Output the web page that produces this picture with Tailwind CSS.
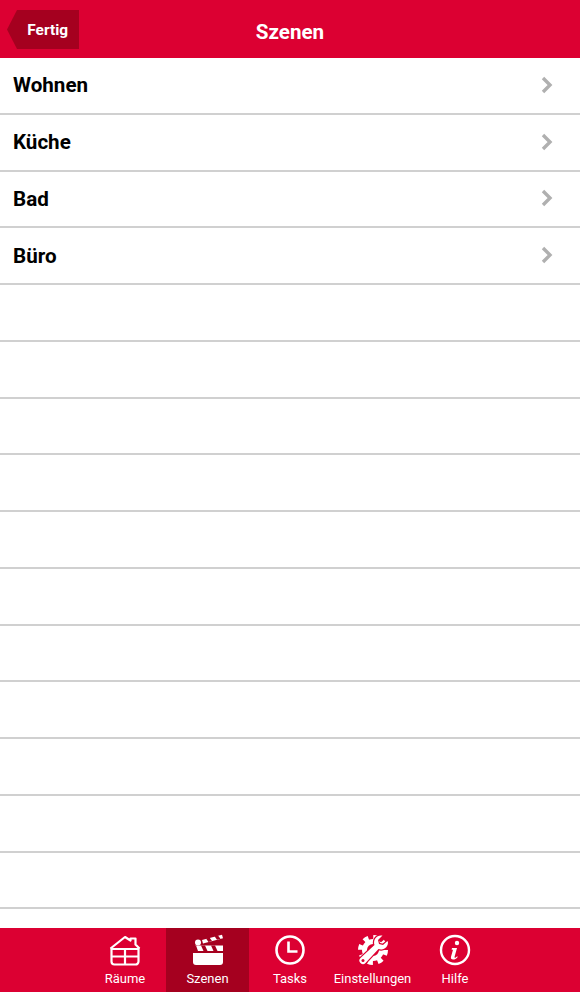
<!DOCTYPE html>
<html lang="de">
<head>
    <meta charset="UTF-8">
    <meta name="viewport" content="width=device-width, initial-scale=1.0">
    <title>Szenen</title>
    <script src="https://cdn.jsdelivr.net/npm/@tailwindcss/browser@4"></script>
</head>
<body class="bg-white font-['Roboto',sans-serif]">
    <div class="flex flex-col h-[992px] w-[580px] overflow-hidden">
        <!-- Kopfzeile -->
        <header class="relative flex items-center justify-center h-[58px] shrink-0 bg-[#dc0032]">
            <div class="absolute left-[7px] top-[10px] flex items-center justify-end w-[72px] h-[39px] pt-[3px] pr-[11px] bg-[#a5001f] [clip-path:polygon(0_50%,10px_0,100%_0,100%_100%,10px_100%)]">
                <span class="text-white text-[15.4px] font-bold">Fertig</span>
            </div>
            <h1 class="mt-[6px] text-white text-[20.6px] font-bold">Szenen</h1>
        </header>

        <!-- Liste -->
        <main class="flex-1 overflow-hidden">
            <div class="flex items-center justify-between h-[56.75px] pt-[1px] pl-[13px] pr-[27px] border-b-2 border-[#d0d0d0]">
                <span class="text-[20.6px] font-bold text-black">Wohnen</span>
                <svg class="mb-[2px]" width="12" height="18" viewBox="0 0 12 18" fill="none" stroke="#b0b0b0" stroke-width="3.4"><path d="M2 2l7 7-7 7"/></svg>
            </div>
            <div class="flex items-center justify-between h-[56.75px] pt-[1px] pl-[13px] pr-[27px] border-b-2 border-[#d0d0d0]">
                <span class="text-[20.6px] font-bold text-black">Küche</span>
                <svg class="mb-[2px]" width="12" height="18" viewBox="0 0 12 18" fill="none" stroke="#b0b0b0" stroke-width="3.4"><path d="M2 2l7 7-7 7"/></svg>
            </div>
            <div class="flex items-center justify-between h-[56.75px] pt-[1px] pl-[13px] pr-[27px] border-b-2 border-[#d0d0d0]">
                <span class="text-[20.6px] font-bold text-black">Bad</span>
                <svg class="mb-[2px]" width="12" height="18" viewBox="0 0 12 18" fill="none" stroke="#b0b0b0" stroke-width="3.4"><path d="M2 2l7 7-7 7"/></svg>
            </div>
            <div class="flex items-center justify-between h-[56.75px] pt-[1px] pl-[13px] pr-[27px] border-b-2 border-[#d0d0d0]">
                <span class="text-[20.6px] font-bold text-black">Büro</span>
                <svg class="mb-[2px]" width="12" height="18" viewBox="0 0 12 18" fill="none" stroke="#b0b0b0" stroke-width="3.4"><path d="M2 2l7 7-7 7"/></svg>
            </div>
            <div class="h-[56.75px] border-b-2 border-[#d0d0d0]"></div>
            <div class="h-[56.75px] border-b-2 border-[#d0d0d0]"></div>
            <div class="h-[56.75px] border-b-2 border-[#d0d0d0]"></div>
            <div class="h-[56.75px] border-b-2 border-[#d0d0d0]"></div>
            <div class="h-[56.75px] border-b-2 border-[#d0d0d0]"></div>
            <div class="h-[56.75px] border-b-2 border-[#d0d0d0]"></div>
            <div class="h-[56.75px] border-b-2 border-[#d0d0d0]"></div>
            <div class="h-[56.75px] border-b-2 border-[#d0d0d0]"></div>
            <div class="h-[56.75px] border-b-2 border-[#d0d0d0]"></div>
            <div class="h-[56.75px] border-b-2 border-[#d0d0d0]"></div>
            <div class="h-[56.75px] border-b-2 border-[#d0d0d0]"></div>
        </main>

        <!-- Tableiste -->
        <nav class="flex justify-center h-[64px] shrink-0 bg-[#dc0032]">
            <div class="flex flex-col items-center w-[82.5px] pt-[6px]">
                <svg width="32" height="32" viewBox="0 0 32 32" fill="none" stroke="white" stroke-width="2.2" stroke-linejoin="round"><path d="M1.500 14.500 16 3l5.500 3.500V4.500h5V10.500l4 4"/><path d="M2.500 14v13.500a3 3 0 0 0 3 3h21a3 3 0 0 0 3-3V14"/><path d="M2.500 15h27M2.500 22.500h27M16 15v15.500"/></svg>
                <span class="mt-[5px] text-white text-[13px] leading-[15px]">Räume</span>
            </div>
            <div class="flex flex-col items-center w-[82.5px] pt-[6px] bg-[#a5001f]">
                <svg width="32" height="32" viewBox="0 0 32 32" fill="white"><path d="M1 19h30v9a3 3 0 0 1-3 3H4a3 3 0 0 1-3-3z"/><circle cx="6" cy="8.500" r="3"/><path d="M3 11.500h28v5.500H3z"/><path d="M10 6 30 .8l1 3.500-20 5.200z"/><path d="M9 11.500h4l2.500 5.500h-4zM19 11.500h4l2.500 5.500h-4zM1 11.500h3l2 5.500H1z" fill="#a5001f"/><path d="M14 4.500l3.500-.9 2.500 3.400-3.500.9zM22.500 2.300l3.500-.9 2.500 3.400-3.500.9z" fill="#a5001f"/></svg>
                <span class="mt-[5px] text-white text-[13px] leading-[15px]">Szenen</span>
            </div>
            <div class="flex flex-col items-center w-[82.5px] pt-[6px]">
                <svg width="32" height="32" viewBox="0 0 32 32" fill="none" stroke="white" stroke-width="2.6"><circle cx="16" cy="16" r="13.500"/><path d="M14.500 7.500v10h9"/></svg>
                <span class="mt-[5px] text-white text-[13px] leading-[15px]">Tasks</span>
            </div>
            <div class="flex flex-col items-center w-[82.5px] pt-[6px]">
                <svg width="32" height="32" viewBox="0 0 32 32" fill="none">
                    <circle cx="16" cy="16" r="8.500" stroke="white" stroke-width="5"/>
                    <circle cx="16" cy="16" r="12.500" stroke="white" stroke-width="5" stroke-dasharray="5 4.800"/>
                    <path d="M24 1.500a7 7 0 0 0-6.500 9.500L3.500 24a3.500 3.500 0 1 0 5 5L21.500 15A7 7 0 0 0 31 8.500l-.5-1.500-4.500 4-4-1-1-4 4.500-4.500z" fill="white" stroke="#dc0032" stroke-width="2.400" paint-order="stroke"/>
                    <circle cx="6" cy="26.500" r="1.500" fill="#dc0032"/>
                </svg>
                <span class="mt-[5px] text-white text-[13px] leading-[15px]">Einstellungen</span>
            </div>
            <div class="flex flex-col items-center w-[82.5px] pt-[6px]">
                <svg width="32" height="32" viewBox="0 0 32 32" fill="none"><circle cx="16" cy="16" r="14" stroke="white" stroke-width="2.400"/><circle cx="18" cy="9" r="2.200" fill="white"/><path d="M13 14h5l-2.500 9c-.2.800.6 1 1.200.5l1.500-1.300.5.700c-1.500 1.900-3 2.600-4.500 2.600-1.800 0-2.700-1-2.200-2.800l2-7h-1.400z" fill="white"/></svg>
                <span class="mt-[5px] text-white text-[13px] leading-[15px]">Hilfe</span>
            </div>
        </nav>
    </div>
</body>
</html>
